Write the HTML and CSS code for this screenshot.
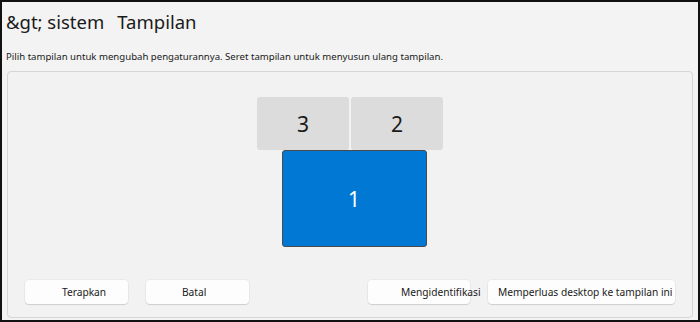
FILE: index.html
```html
<!DOCTYPE html>
<html lang="id">
<head>
    <meta charset="UTF-8">
    <meta name="viewport" content="width=device-width, initial-scale=1.0">
    <title>Tampilan</title>
    <link rel="stylesheet" href="styles.css">
</head>
<body>
    <div class="frame">
        <h1 class="title">
            <span class="crumb">&amp;gt; sistem</span>
            <span class="page">Tampilan</span>
        </h1>
        <p class="hint">Pilih tampilan untuk mengubah pengaturannya. Seret tampilan untuk menyusun ulang tampilan.</p>

        <div class="panel">
            <div class="monitors">
                <div class="monitor-row">
                    <div class="monitor">3</div>
                    <div class="monitor">2</div>
                </div>
                <div class="monitor monitor-main">1</div>
            </div>

            <div class="actions">
                <div class="btn-group">
                    <button class="btn btn-apply">Terapkan</button>
                    <button class="btn btn-cancel">Batal</button>
                </div>
                <div class="btn-group">
                    <button class="btn btn-identify">Mengidentifikasi</button>
                    <button class="btn btn-extend">Memperluas desktop ke tampilan ini</button>
                </div>
            </div>
        </div>
    </div>
</body>
</html>
```

FILE: styles.css
```css
html, body {
    margin: 0;
    padding: 0;
}

body {
    font-family: "Noto Sans", "Open Sans", sans-serif;
    color: #1a1a1a;
    background: #f3f3f3;
}

.frame {
    width: 700px;
    height: 322px;
    box-sizing: border-box;
    border: 2px solid #111;
    background: #f3f3f3;
    padding: 0 5px 2px 4px;
    display: flex;
    flex-direction: column;
}

.title {
    margin: 0;
    padding-top: 7px;
    font-size: 18.5px;
    font-weight: 400;
    line-height: 26px;
    display: flex;
    gap: 13px;
}

.hint {
    margin: 15px 0 0;
    font-size: 9.6px;
    line-height: 14px;
}

.panel {
    margin: 7px 0 0 1px;
    flex: 1;
    border: 1px solid #d6d6d6;
    border-radius: 4px;
    background: #f2f2f2;
    display: flex;
    flex-direction: column;
}

.monitors {
    display: flex;
    flex-direction: column;
    align-items: center;
    padding-top: 25px;
}

.monitor-row {
    display: flex;
    gap: 2px;
}

.monitor {
    width: 92px;
    height: 53px;
    border-radius: 3px;
    background: #dcdcdc;
    display: flex;
    align-items: center;
    justify-content: center;
    font-size: 21px;
    color: #1a1a1a;
}

.monitor-main {
    width: 143px;
    height: 95px;
    margin-left: 8px;
    background: #0078d4;
    border: 1px solid #4a4a4a;
    color: #fff;
}

.actions {
    margin-top: auto;
    padding: 0 17px 13px;
    display: flex;
    justify-content: space-between;
}

.btn-group {
    display: flex;
    gap: 18px;
}

.btn {
    height: 24px;
    border: none;
    border-radius: 4px;
    background: #fdfdfd;
    box-shadow: 0 1px 1px rgba(0, 0, 0, 0.12), 0 0 0 1px rgba(0, 0, 0, 0.03);
    font-family: inherit;
    font-size: 10.2px;
    color: #1a1a1a;
    white-space: nowrap;
    text-align: left;
    padding: 0;
}

.btn-apply {
    width: 103px;
    padding-left: 37px;
}

.btn-cancel {
    width: 103px;
    padding-left: 36px;
}

.btn-identify {
    width: 102px;
    padding-left: 33px;
    overflow: visible;
}

.btn-extend {
    width: 187px;
    padding-left: 10px;
}
```
